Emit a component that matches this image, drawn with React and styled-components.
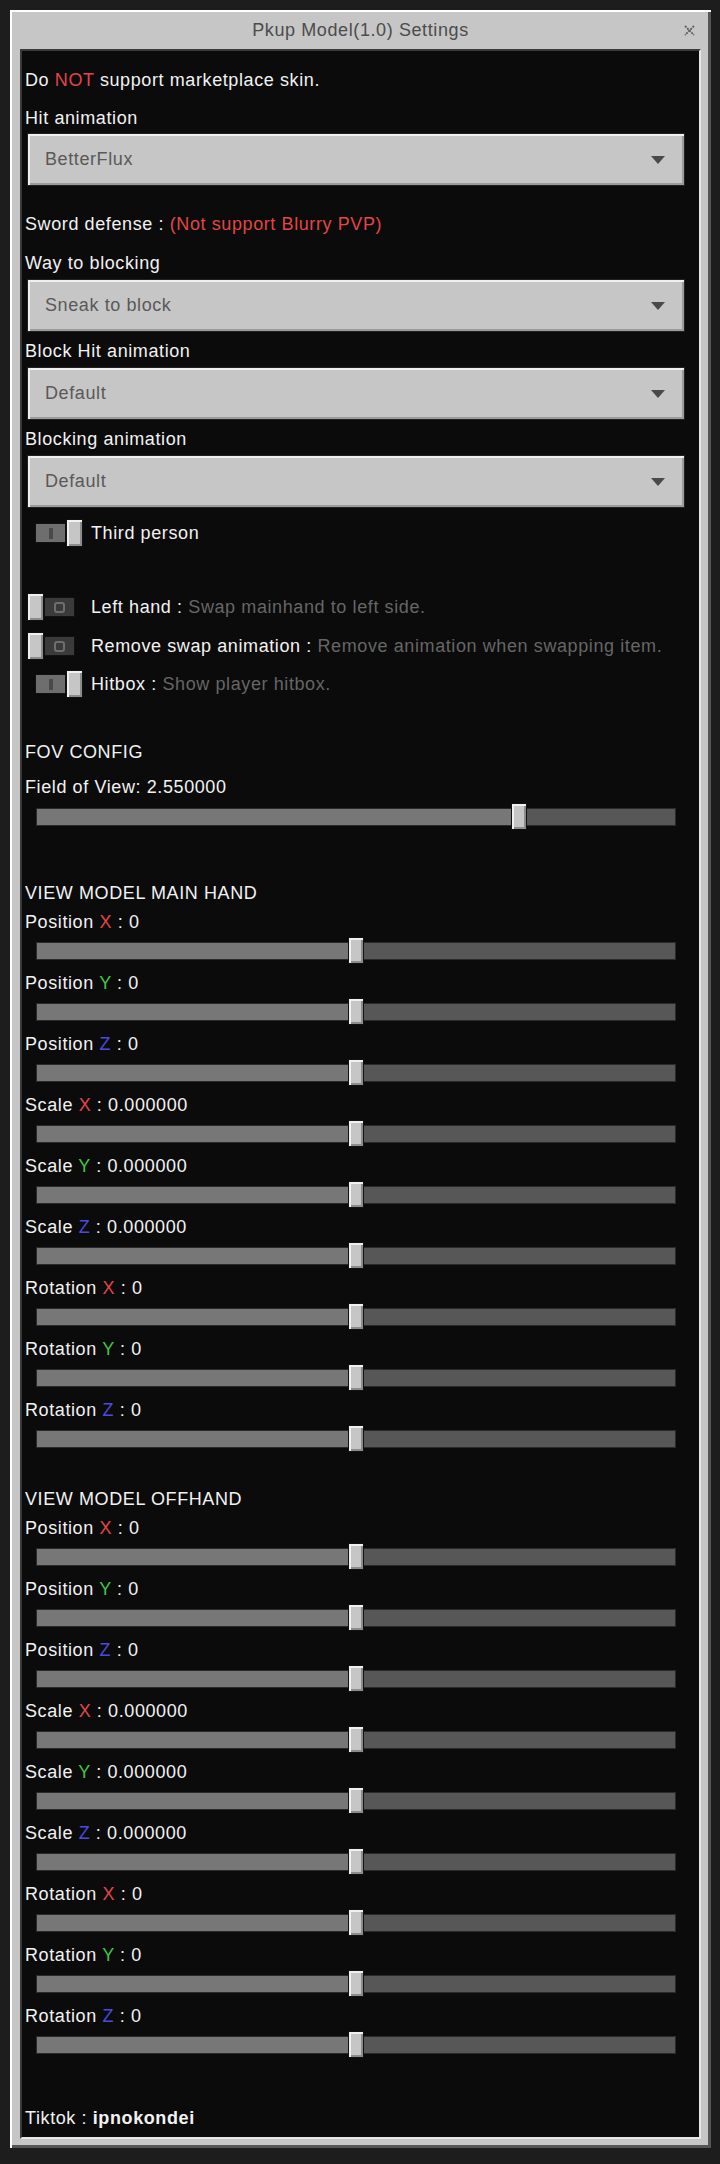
import React from 'react'
import styled, { createGlobalStyle } from 'styled-components'

const GlobalStyle = createGlobalStyle`
    html, body
    {
        margin: 0;
        padding: 0;
        background: #1d1d1d;
    }

    body
    {
        font-family: 'Liberation Sans', Arial, sans-serif;
    }
`

const Page = styled.div`
    box-sizing: border-box;
    min-height: 2164px;
    padding: 10px 0 0 10px;
`

const Dialog = styled.div`
    box-sizing: border-box;
    width: 701px;

    background: #c6c6c6;
    box-shadow: inset 2px 2px 0 #ffffff, inset -3px -3px 0 #555555;

    padding: 0 10px 9px 10px;
`

const TitleBar = styled.div`
    display: grid;
    grid-template-columns: 1fr auto 1fr;
    align-items: center;

    height: 39px;
    padding-top: 2px;
    box-sizing: border-box;
`

const Title = styled.div`
    grid-column: 2;

    font-size: 18px;
    letter-spacing: 0.6px;
    color: #4c4c4c;
`

const Close = styled.div`
    justify-self: end;
    display: flex;
    margin-right: 6px;
`

const Panel = styled.div`
    background: #0b0b0b;

    border-style: solid;
    border-width: 2px;
    border-color: #3a3a3a #e6e6e6 #e6e6e6 #3a3a3a;

    padding: 18px 12px 8px 3px;
`

const Line = styled.div`
    margin-top: ${p => p.$mt || 0}px;

    font-size: 18px;
    line-height: 22px;
    letter-spacing: 0.6px;
    white-space: nowrap;

    color: #f2f2f2;

    b
    {
        font-weight: 700;
    }
`

const Tone = styled.span`
    color: ${p => p.$color};
`

const Select = styled.div`
    margin: ${p => p.$mt || 0}px 2px 0;
    height: 53px;
    box-sizing: border-box;

    display: flex;
    align-items: center;
    justify-content: space-between;

    padding: 0 19px 0 17px;

    background: #c6c6c6;
    border: 1px solid #222222;
    box-shadow: inset 2px 2px 0 #efefef, inset -2px -2px 0 #9b9b9b;

    font-size: 18px;
    letter-spacing: 0.6px;
    color: #595959;
`

const ToggleRow = styled.div`
    display: flex;
    align-items: center;
    gap: 8px;

    height: 28px;
    margin-top: ${p => p.$mt || 0}px;
`

const ToggleSlot = styled.div`
    width: 56px;
    margin-left: 2px;

    display: flex;
    justify-content: ${p => p.$on ? 'flex-end' : 'flex-start'};
`

const Switch = styled.div`
    display: flex;
    align-items: center;
    flex-direction: ${p => p.$on ? 'row' : 'row-reverse'};
`

const SwitchTrack = styled.div`
    box-sizing: border-box;
    width: 31px;
    height: 20px;

    display: flex;
    align-items: center;
    justify-content: center;

    border: 1px solid #111111;
    background: ${p => p.$on ? '#6e6e6e' : '#3a3a3a'};
`

const OnMark = styled.div`
    width: 4px;
    height: 11px;
    background: #4a4a4a;
`

const OffMark = styled.div`
    box-sizing: border-box;
    width: 11px;
    height: 11px;
    border: 2px solid #6e6e6e;
    border-radius: 3px;
`

const Knob = styled.div`
    box-sizing: border-box;
    width: ${p => p.$w || 16}px;
    height: ${p => p.$h || 27}px;

    background: #c6c6c6;
    border: 1px solid #111111;
    box-shadow: inset 2px 2px 0 #f0f0f0, inset -2px -2px 0 #8c8c8c;
`

const SliderRow = styled.div`
    position: relative;

    height: 35px;
    margin: ${p => p.$mt || 0}px 11px 4px;

    display: flex;
    align-items: center;
`

const Track = styled.div`
    flex: 1;
    display: flex;

    box-sizing: border-box;
    height: 18px;

    border: 1px solid #2a2a2a;
`

const Fill = styled.div`
    background: #777777;
`

const Rest = styled.div`
    flex: 1;
    background: #575757;
`

const Thumb = styled(Knob)`
    position: absolute;
    top: 4px;
`

const Gray = styled.span`
    color: #666666;
`

const AXIS = {
    X: '#e04646',
    Y: '#42c742',
    Z: '#4b4be0',
}

const AXIS_ROWS = [
    ['Position', 'X', '0'],
    ['Position', 'Y', '0'],
    ['Position', 'Z', '0'],
    ['Scale', 'X', '0.000000'],
    ['Scale', 'Y', '0.000000'],
    ['Scale', 'Z', '0.000000'],
    ['Rotation', 'X', '0'],
    ['Rotation', 'Y', '0'],
    ['Rotation', 'Z', '0'],
]

function CloseIcon ()
{
    return (
        <svg width="11" height="11" viewBox="0 0 11 11">
            <path d="M1 1 L10 10 M10 1 L1 10" stroke="#5f5f5f" strokeWidth="1.8" strokeDasharray="2 1" fill="none" />
        </svg>
    )
}

function Arrow ()
{
    return (
        <svg width="14" height="8" viewBox="0 0 14 8">
            <path d="M0 0 H14 L7 8 Z" fill="#4a4a4a" />
        </svg>
    )
}

function Dropdown ({ mt, value })
{
    return (
        <Select $mt={mt}>
            <span>{value}</span>
            <Arrow />
        </Select>
    )
}

function Toggle ({ mt, on, children })
{
    return (
        <ToggleRow $mt={mt}>
            <ToggleSlot $on={on}>
                <Switch $on={on}>
                    <SwitchTrack $on={on}>
                        {on ? <OnMark /> : <OffMark />}
                    </SwitchTrack>
                    <Knob $w={17} $h={28} />
                </Switch>
            </ToggleSlot>
            <Line>{children}</Line>
        </ToggleRow>
    )
}

function Slider ({ mt, value })
{
    return (
        <SliderRow $mt={mt}>
            <Track>
                <Fill style={{ width: `${value}%` }} />
                <Rest />
            </Track>
            <Thumb style={{ left: `calc(${value}% - 8px)` }} />
        </SliderRow>
    )
}

function AxisGroup ()
{
    return AXIS_ROWS.map(([name, axis, val], i) => (
        <React.Fragment key={name + axis}>
            <Line $mt={i === 0 ? 7 : 0}>
                {name} <Tone $color={AXIS[axis]}>{axis}</Tone> : {val}
            </Line>
            <Slider value={50} />
        </React.Fragment>
    ))
}

function App ()
{
    return (
        <Page>
            <GlobalStyle />
            <Dialog>
                <TitleBar>
                    <Title>Pkup Model(1.0) Settings</Title>
                    <Close><CloseIcon /></Close>
                </TitleBar>
                <Panel>
                    <Line>Do <Tone $color="#e04646">NOT</Tone> support marketplace skin.</Line>

                    <Line $mt={16}>Hit animation</Line>
                    <Dropdown mt={4} value="BetterFlux" />

                    <Line $mt={27}>Sword defense : <Tone $color="#e04646">(Not support Blurry PVP)</Tone></Line>
                    <Line $mt={17}>Way to blocking</Line>
                    <Dropdown mt={5} value="Sneak to block" />

                    <Line $mt={8}>Block Hit animation</Line>
                    <Dropdown mt={5} value="Default" />

                    <Line $mt={8}>Blocking animation</Line>
                    <Dropdown mt={5} value="Default" />

                    <Toggle mt={11} on>Third person</Toggle>

                    <Toggle mt={46}>Left hand : <Gray>Swap mainhand to left side.</Gray></Toggle>
                    <Toggle mt={11}>Remove swap animation : <Gray>Remove animation when swapping item.</Gray></Toggle>
                    <Toggle mt={10} on>Hitbox : <Gray>Show player hitbox.</Gray></Toggle>

                    <Line $mt={43}>FOV CONFIG</Line>
                    <Line $mt={13}>Field of View: 2.550000</Line>
                    <Slider mt={1} value={75.5} />

                    <Line $mt={48}>VIEW MODEL MAIN HAND</Line>
                    <AxisGroup />

                    <Line $mt={32}>VIEW MODEL OFFHAND</Line>
                    <AxisGroup />

                    <Line $mt={45}>Tiktok : <b>ipnokondei</b></Line>
                </Panel>
            </Dialog>
        </Page>
    )
}

export default App
